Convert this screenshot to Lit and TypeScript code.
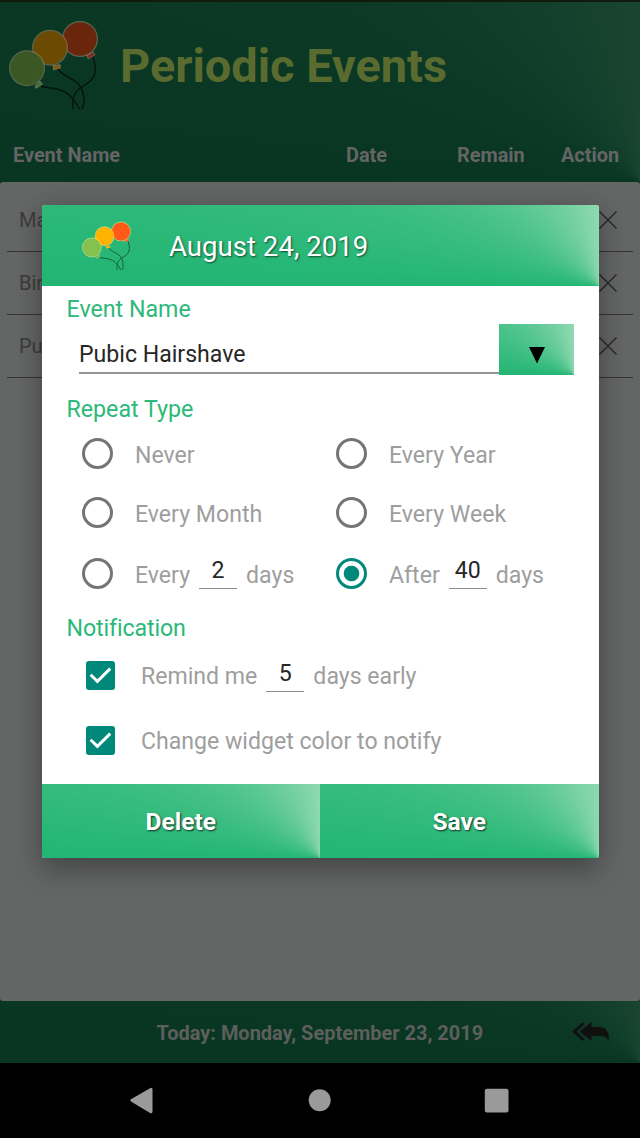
import { LitElement, html, css, svg } from "lit";
import { customElement, property } from "lit/decorators.js";

@customElement("balloon-logo")
class BalloonLogo extends LitElement {
  static styles = css`
    :host { display: block; }
    svg { display: block; width: 100%; height: 100%; }
    .rim { fill: rgba(255, 255, 255, 0.45); }
    .string { fill: none; stroke: #04140d; stroke-width: 1.4; }
    .green { fill: #86c04d; }
    .yellow { fill: #ffb300; }
    .red { fill: #ff5a17; }
    .knot { stroke: rgba(255, 255, 255, 0.25); stroke-width: 0.8; }
    .small .string { stroke: #14603f; stroke-width: 1.8; }
    .small .rim { fill: rgba(255, 240, 150, 0.6); }
    .dim .green { fill: #3a5724; }
    .dim .yellow { fill: #6b4b02; }
    .dim .red { fill: #6a250d; }
    .dim .knot.red { fill: #84281a; }
    .dim .knot.yellow { fill: #805810; }
    .dim .knot.green { fill: #4a6d33; }
    .dim .rim { fill: rgba(140, 135, 110, 0.6); }
  `;
  @property({ type: Boolean }) dim = false;

  balloon(cx: number, cy: number, color: string, knot: string) {
    return svg`
      <path class="knot ${color}" d=${knot} />
      <circle class="rim" cx=${cx} cy=${cy} r="18" />
      <circle class=${color} cx=${cx} cy=${cy} r="16.8" />`;
  }

  render() {
    return html`<svg viewBox="0 0 100 112" class=${this.dim ? "dim" : "small"}>
      <path class="string" d="M93 57 C100 78 90 82 80 88 C73 93 72 102 73 109" />
      <path class="string" d="M58 69 C65 79 80 78 83 93 C85 101 84 104 82 109" />
      <path class="string" d="M41 86.500 C58 89 69 88 79.500 109" />
      ${this.balloon(80, 39, "red", "M87 55.500 L93.500 52 L95 55 L88 59Z")}
      ${this.balloon(50, 47.700, "yellow", "M53 65.500 L60 64.500 L60.500 68 L53.500 70Z")}
      ${this.balloon(27, 68.200, "green", "M35 86 L40 81 L42.500 84 L36 88.500Z")}
    </svg>`;
  }
}

@customElement("radio-option")
class RadioOption extends LitElement {
  static styles = css`
    :host { display: flex; align-items: center; width: 254px; }
    .dot {
      box-sizing: border-box; width: 31px; height: 31px; border-radius: 50%;
      border: 3px solid #757575; margin: 0 22px 1px 0; flex: none;
    }
    .dot.on {
      border-color: #00897b;
      background: radial-gradient(circle, #00897b 7.4px, #fff 8.2px);
    }
    .text { display: flex; padding-top: 2px; }
  `;
  @property({ type: Boolean }) checked = false;
  render() {
    return html`<span class="dot ${this.checked ? "on" : ""}"></span
      ><span class="text"><slot></slot></span>`;
  }
}

@customElement("check-option")
class CheckOption extends LitElement {
  static styles = css`
    :host { display: flex; align-items: center; height: 65px; padding-left: 44.500px; }
    svg { width: 29px; height: 29px; margin-right: 26px; display: block; }
    .text { display: flex; padding-top: 1px; }
  `;
  render() {
    return html`<svg viewBox="0 0 29 29">
        <rect width="29" height="29" rx="3" fill="#00897b" />
        <path d="M4.600 13.800 L11.400 20.400 L24.200 7.600" fill="none" stroke="#fff" stroke-width="2.900" />
      </svg><span class="text"><slot></slot></span>`;
  }
}

@customElement("app-root")
class AppRoot extends LitElement {
  static styles = css`
    :host {
      display: flex; flex-direction: column; position: relative; overflow: hidden;
      width: 640px; height: 1138px; background: #0a3624;
      font-family: Roboto, "Liberation Sans", sans-serif; font-size: 23.100px;
    }
    .status { height: 2px; background: #101a0d; }
    .top {
      height: 180px;
      background: conic-gradient(from 270deg at 100% 100%, #093523 0deg, #0c3926 27deg, #113f2b 57deg, #1a4530 90deg);
    }
    .brand { display: flex; align-items: flex-start; height: 128px; }
    .brand balloon-logo { width: 100px; height: 112px; margin-top: -2px; }
    .brand h1 {
      margin: 33px 0 0 20px; font-size: 46.900px; line-height: 62px; color: #5a6b2f; font-weight: 700;
      white-space: nowrap;
    }
    .heads {
      display: grid; grid-template-columns: 333px 111px 104px 1fr; padding-left: 13px;
      font-size: 19.900px; line-height: 52px; font-weight: 700; color: #656565;
    }
    .list {
      height: 819px; background: #646665; border-radius: 3px;
      box-sizing: border-box; padding: 7px 7px 0;
    }
    .item {
      display: flex; justify-content: space-between; align-items: center;
      box-sizing: border-box; height: 63px; padding: 0 15px 0 12px;
      border-bottom: 1px solid #343434; color: #3b3c3b; font-size: 20px;
    }
    .item svg { width: 20px; height: 20px; stroke: #2c2c2c; stroke-width: 1.6; margin-bottom: 1px; }
    .foot {
      height: 62px; display: flex; align-items: center; box-sizing: border-box;
      padding: 1px 31.500px 0 156.500px; justify-content: space-between;
      font-size: 19.980px; font-weight: 700; color: #5c5f5c;
      background: conic-gradient(from 270deg at 100% 100%, #093523 0deg, #0c3926 27deg, #113f2b 57deg, #1a4530 90deg);
    }
    .foot svg { width: 37px; height: 20px; margin-top: -1px; }
    .nav { height: 75px; background: #000; }
    .nav svg { display: block; width: 640px; height: 75px; fill: #9a9a9a; }

    .dialog {
      position: absolute; left: 41.500px; top: 204.500px; width: 557px; height: 653.500px;
      border-radius: 3px; overflow: hidden; background: #fff; color: #9e9e9e;
    }
    .shadow {
      position: absolute; left: 41.500px; top: 204.500px; width: 557px; height: 653.500px;
      border-radius: 3px; box-shadow: 0 14px 28px rgba(0, 0, 0, 0.25), 0 0 24px rgba(0, 0, 0, 0.12);
    }
    .sweep { background: conic-gradient(from 270deg at 100% 100%, #22b573 0deg, #8fd9b0 90deg); }
    .title { display: flex; height: 81.500px; color: #fff; }
    .title balloon-logo { width: 55px; height: 61.600px; margin: 5px 0 0 35.300px; }
    .title span {
      margin-left: 37.200px; line-height: 84px; font-size: 27.600px;
      text-shadow: 1px 1px 2px rgba(0, 0, 0, 0.6);
    }
    .label { color: #2cb979; padding-left: 25px; font-size: 23.200px; }
    .name { padding-top: 9px; line-height: 29px; height: 28.500px; }
    .repeat { padding-top: 19px; line-height: 31px; }
    .notify { padding-top: 8px; line-height: 30px; letter-spacing: -0.120px; font-variant-ligatures: common-ligatures; }
    .entry { display: flex; height: 51.500px; padding: 0 25px 0 37.500px; }
    .field {
      flex: 1; box-sizing: border-box; height: 50px; line-height: 61px;
      border-bottom: 2px solid #959595; color: #262626;
    }
    .drop { width: 75px; display: flex; justify-content: center; }
    .drop svg { width: 16px; height: 17px; margin: 23.500px 0 0 1px; }
    .options {
      display: grid; grid-template-columns: 254px 254px; grid-template-rows: 58px 60px 62px;
      padding-left: 40.500px;
    }
    .num {
      box-sizing: border-box; width: 38px; height: 31px; margin: -4px 9px 0;
      border-bottom: 1.500px solid #8a8a8a; text-align: center; color: #262626;
      line-height: 26px;
    }
    check-option .num { margin: -2px 9px -4px; }
    .actions { display: flex; height: 74.500px; margin-top: 10.500px; }
    .btn {
      flex: 1; text-align: center; line-height: 76px; color: #fff; font-weight: 700; font-size: 24.600px;
      text-shadow: 1px 1px 2px rgba(0, 0, 0, 0.75);
    }
  `;

  items = ["Ma", "Bir", "Pu"];

  render() {
    return html`
      <div class="status"></div>
      <header class="top">
        <div class="brand"><balloon-logo dim></balloon-logo><h1>Periodic Events</h1></div>
        <div class="heads"><span>Event Name</span><span>Date</span><span>Remain</span><span>Action</span></div>
      </header>
      <main class="list">
        ${this.items.map((name) => html`<div class="item"><span>${name}</span>
          <svg viewBox="0 0 20 20"><path d="M1.500 1.500 L18.500 18.500 M18.500 1.500 L1.500 18.500" /></svg></div>`)}
      </main>
      <footer class="foot">
        <span>Today: Monday, September 23, 2019</span>
        <svg viewBox="0 0 37 20" fill="#101010">
          <path d="M0 9.500 L10.500 0.500 L12.500 2 L4.500 9.500 L12.500 17 L10.500 19Z" />
          <path d="M7.500 9.500 L19.500 0 V5 H27 C34 5 38 10 36.500 19 C35 15 32 14 27 14 H19.500 V19Z" />
        </svg>
      </footer>
      <nav class="nav"><svg viewBox="0 0 640 75">
        <path d="M130.500 36.500 Q130 37.500 131 38.500 L150 50 Q152.500 51 152.500 48.500 V26.500 Q152.500 24 150 25.300Z" />
        <circle cx="319.700" cy="37.300" r="11" />
        <rect x="484.800" y="25.700" width="23.700" height="23.700" rx="2" />
      </svg></nav>

      <div class="shadow"></div>
      <section class="dialog">
        <div class="title sweep"><balloon-logo></balloon-logo><span>August 24, 2019</span></div>
        <div class="label name">Event Name</div>
        <div class="entry">
          <div class="field">Pubic Hairshave</div>
          <div class="drop sweep"><svg viewBox="0 0 16 17"><path d="M0 0 H16 L8 16.500Z" /></svg></div>
        </div>
        <div class="label repeat">Repeat Type</div>
        <div class="options">
          <radio-option>Never</radio-option>
          <radio-option>Every Year</radio-option>
          <radio-option>Every Month</radio-option>
          <radio-option>Every Week</radio-option>
          <radio-option>Every<span class="num">2</span>days</radio-option>
          <radio-option checked>After<span class="num">40</span>days</radio-option>
        </div>
        <div class="label notify">Notification</div>
        <check-option>Remind me<span class="num">5</span>days early</check-option>
        <check-option>Change widget color to notify</check-option>
        <div class="actions"><div class="btn sweep">Delete</div><div class="btn sweep">Save</div></div>
      </section>
    `;
  }
}
